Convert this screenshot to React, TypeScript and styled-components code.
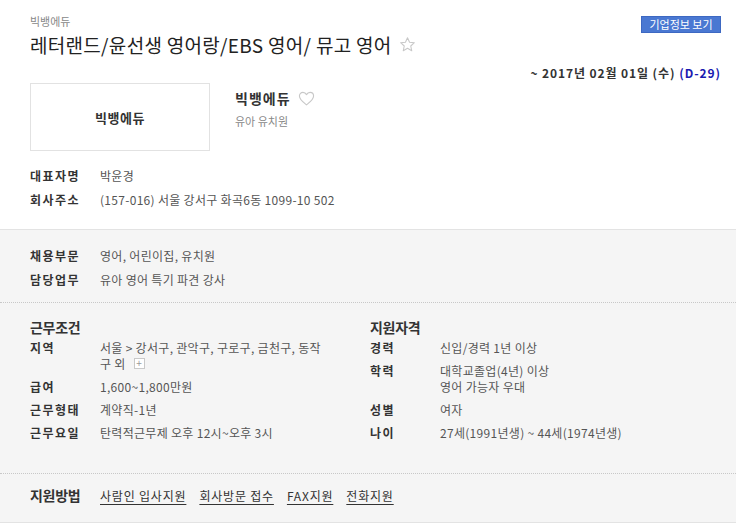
import { FC, ReactNode } from 'react';
import styled, { createGlobalStyle } from 'styled-components';

const GlobalStyle = createGlobalStyle`
  html, body {
    margin: 0;
    padding: 0;
    background: #fff;
  }
  body {
    font-family: "Noto Sans CJK KR", "Liberation Sans", sans-serif;
    font-size: 12px;
    color: #333;
  }
`;

const Page = styled.div`
  width: 736px;
`;

const Header = styled.div`
  padding: 13px 15px 18px 30px;
  background: #fff;
  border-bottom: 1px solid #e3e3e3;
`;

const TopRow = styled.div`
  display: flex;
  justify-content: space-between;
  align-items: flex-start;
`;

const CompanyTag = styled.div`
  height: 16px;
  display: flex;
  align-items: center;
  font-size: 11px;
  color: #888;
`;

const Title = styled.h1`
  margin: 2px 0 0;
  height: 26px;
  font-size: 19px;
  font-weight: normal;
  letter-spacing: 0.3px;
  color: #222;
  display: flex;
  align-items: center;
  gap: 7px;
`;

const InfoButton = styled.button`
  margin-top: 3px;
  width: 80px;
  height: 17px;
  padding: 0;
  border: 1px solid #3d68c2;
  background: #4a78d2;
  color: #fff;
  font-family: inherit;
  font-size: 11px;
  line-height: 15px;
  cursor: pointer;
`;

const DateRow = styled.div`
  margin-top: 7px;
  height: 16px;
  display: flex;
  align-items: center;
  justify-content: flex-end;
  gap: 4px;
  font-weight: bold;
  letter-spacing: 0.9px;
  color: #333;
`;

const DDay = styled.span`
  color: #1a1ab0;
`;

const CompanyRow = styled.div`
  margin-top: 3px;
  display: flex;
`;

const LogoBox = styled.div`
  width: 180px;
  height: 68px;
  box-sizing: border-box;
  border: 1px solid #e2e2e2;
  display: flex;
  align-items: center;
  justify-content: center;
  font-size: 13px;
  font-weight: bold;
  letter-spacing: 0.5px;
  color: #333;
`;

const CompanyInfo = styled.div`
  margin-left: 25px;
  padding-top: 6px;
`;

const CompanyName = styled.div`
  height: 18px;
  font-size: 14px;
  font-weight: bold;
  letter-spacing: 1px;
  color: #333;
  display: flex;
  align-items: center;
  gap: 7px;
`;

const CompanySub = styled.div`
  margin-top: 6px;
  height: 16px;
  display: flex;
  align-items: center;
  font-size: 11px;
  color: #888;
`;

const RowList = styled.div<{ $gap?: number; $top?: number }>`
  display: flex;
  flex-direction: column;
  gap: ${(p) => p.$gap ?? 0}px;
  margin-top: ${(p) => p.$top ?? 0}px;
`;

const Row = styled.div<{ $tall?: boolean }>`
  display: flex;
  align-items: ${(p) => (p.$tall ? 'center' : 'flex-start')};
  height: ${(p) => (p.$tall ? '24px' : 'auto')};
`;

const Label = styled.div`
  width: 70px;
  flex-shrink: 0;
  font-weight: bold;
  color: #333;
  letter-spacing: 1.5px;
`;

const Value = styled.div`
  flex: 1;
  color: #555;
  letter-spacing: 0.3px;
`;

const Line = styled.div`
  height: 16px;
  display: flex;
  align-items: center;
  white-space: nowrap;
`;

const GraySection = styled.div<{ $solid?: boolean }>`
  background: #f5f5f5;
  padding: ${(p) => (p.$solid ? '11px 30px 17px' : '13px 30px 11px')};
  border-bottom: 1px ${(p) => (p.$solid ? 'solid #e3e3e3' : 'dotted #c8c8c8')};
`;

const Conditions = styled.div`
  background: #f5f5f5;
  padding: 14px 15px 33px 30px;
  border-bottom: 1px dotted #c8c8c8;
  display: grid;
  grid-template-columns: 340px 1fr;
`;

const ColumnTitle = styled.h3`
  margin: 0;
  height: 20px;
  display: flex;
  align-items: center;
  font-size: 14px;
  font-weight: bold;
  color: #333;
  letter-spacing: -0.3px;
`;

const PlusBox = styled.span`
  display: inline-flex;
  align-items: center;
  justify-content: center;
  box-sizing: border-box;
  width: 11px;
  height: 11px;
  margin-left: 8px;
  border: 1px solid #c9c9c9;
  background: #fff;
  color: #999;
  font-size: 10px;
  line-height: 1;
`;

const ApplyRow = styled.div`
  display: flex;
  align-items: center;
  height: 20px;
`;

const ApplyLabel = styled.div`
  width: 70px;
  font-size: 14px;
  font-weight: bold;
  color: #333;
  letter-spacing: -0.3px;
`;

const ApplyLinks = styled.div`
  display: flex;
  gap: 13px;
`;

const ApplyLink = styled.a`
  color: #333;
  letter-spacing: 0.8px;
  text-decoration: underline;
  text-underline-offset: 3px;
`;

const Star: FC = () => (
  <svg width="17" height="17" viewBox="0 0 24 24" fill="none" stroke="#c8c8c8" strokeWidth="1.5" strokeLinejoin="round">
    <polygon points="12,2.5 14.9,8.8 21.7,9.5 16.6,14.1 18,20.9 12,17.4 6,20.9 7.4,14.1 2.3,9.5 9.1,8.8" />
  </svg>
);

const Heart: FC = () => (
  <svg width="17" height="15" viewBox="0 0 24 21" fill="none" stroke="#c8c8c8" strokeWidth="1.6" strokeLinejoin="round">
    <path d="M12 19.5 C7 15.5 2 12 2 7 C2 4 4.3 1.8 7 1.8 C9.2 1.8 11 3.2 12 5 C13 3.2 14.8 1.8 17 1.8 C19.7 1.8 22 4 22 7 C22 12 17 15.5 12 19.5 Z" />
  </svg>
);

type Item = { label: string; lines: ReactNode[] };

const left: Item[] = [
  { label: '지역', lines: ['서울 > 강서구, 관악구, 구로구, 금천구, 동작', <>구 외<PlusBox>+</PlusBox></>] },
  { label: '급여', lines: ['1,600~1,800만원'] },
  { label: '근무형태', lines: ['계약직-1년'] },
  { label: '근무요일', lines: ['탄력적근무제 오후 12시~오후 3시'] },
];

const right: Item[] = [
  { label: '경력', lines: ['신입/경력 1년 이상'] },
  { label: '학력', lines: ['대학교졸업(4년) 이상', '영어 가능자 우대'] },
  { label: '성별', lines: ['여자'] },
  { label: '나이', lines: ['27세(1991년생) ~ 44세(1974년생)'] },
];

const ConditionColumn: FC<{ title: string; items: Item[] }> = ({ title, items }) => (
  <div>
    <ColumnTitle>{title}</ColumnTitle>
    <RowList $gap={7} $top={2}>
      {items.map((r) => (
        <Row key={r.label}>
          <Label as={Line}>{r.label}</Label>
          <Value>
            {r.lines.map((l, i) => (
              <Line key={i}>{l}</Line>
            ))}
          </Value>
        </Row>
      ))}
    </RowList>
  </div>
);

const App: FC = () => {
  return (
    <Page>
      <GlobalStyle />
      <Header>
        <TopRow>
          <div>
            <CompanyTag>빅뱅에듀</CompanyTag>
            <Title>
              레터랜드/윤선생 영어랑/EBS 영어/ 뮤고 영어
              <Star />
            </Title>
          </div>
          <InfoButton>기업정보 보기</InfoButton>
        </TopRow>
        <DateRow>
          <span>~ 2017년 02월 01일 (수)</span>
          <DDay>(D-29)</DDay>
        </DateRow>
        <CompanyRow>
          <LogoBox>빅뱅에듀</LogoBox>
          <CompanyInfo>
            <CompanyName>
              빅뱅에듀
              <Heart />
            </CompanyName>
            <CompanySub>유아 유치원</CompanySub>
          </CompanyInfo>
        </CompanyRow>
        <RowList $top={12}>
          <Row $tall>
            <Label>대표자명</Label>
            <Value>박윤경</Value>
          </Row>
          <Row $tall>
            <Label>회사주소</Label>
            <Value>(157-016) 서울 강서구 화곡6동 1099-10 502</Value>
          </Row>
        </RowList>
      </Header>

      <GraySection>
        <RowList>
          <Row $tall>
            <Label>채용부문</Label>
            <Value>영어, 어린이집, 유치원</Value>
          </Row>
          <Row $tall>
            <Label>담당업무</Label>
            <Value>유아 영어 특기 파견 강사</Value>
          </Row>
        </RowList>
      </GraySection>

      <Conditions>
        <ConditionColumn title="근무조건" items={left} />
        <ConditionColumn title="지원자격" items={right} />
      </Conditions>

      <GraySection $solid>
        <ApplyRow>
          <ApplyLabel>지원방법</ApplyLabel>
          <ApplyLinks>
            <ApplyLink>사람인 입사지원</ApplyLink>
            <ApplyLink>회사방문 접수</ApplyLink>
            <ApplyLink>FAX지원</ApplyLink>
            <ApplyLink>전화지원</ApplyLink>
          </ApplyLinks>
        </ApplyRow>
      </GraySection>
    </Page>
  );
};

export default App;
